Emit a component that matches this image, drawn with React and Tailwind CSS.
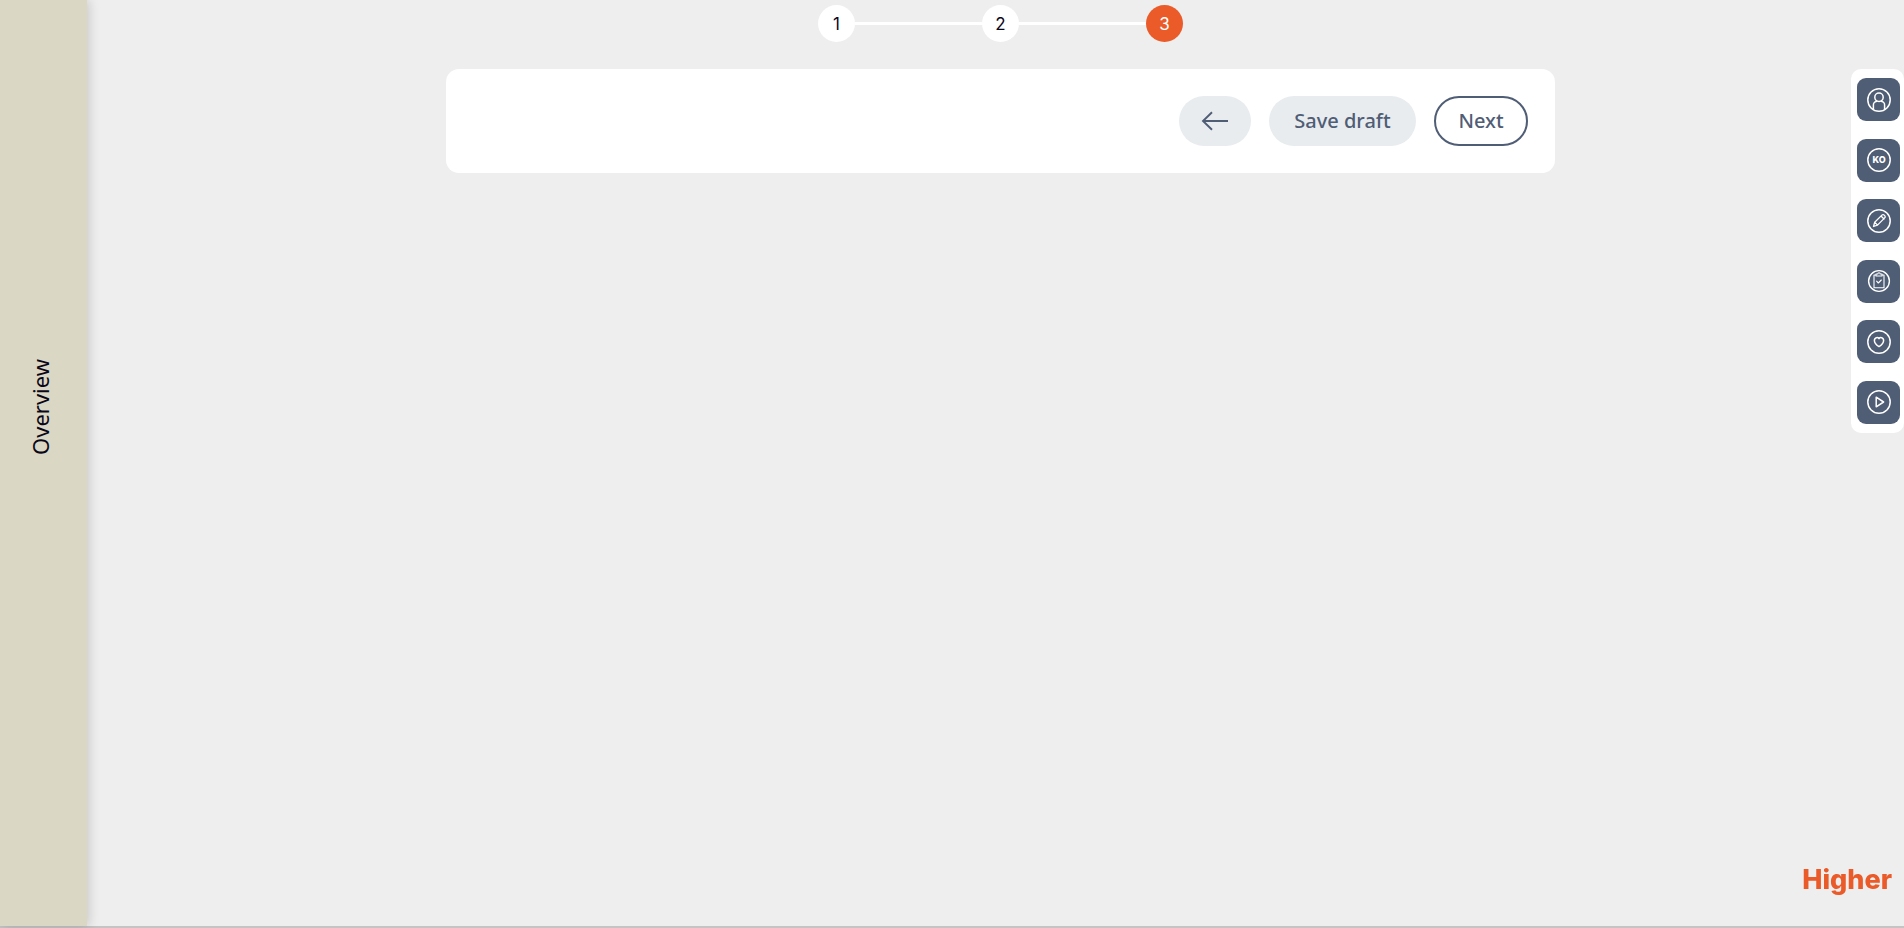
const steps = [1, 2, 3];
const currentStep = 3;

function CircleIcon({ children }) {
    return (
        <svg className="w-6 h-6" viewBox="0 0 24 24" fill="none" stroke="currentColor" strokeWidth="1.5" strokeLinecap="round" strokeLinejoin="round" aria-hidden="true">
            <circle cx="12" cy="12" r="11.2" />
            {children}
        </svg>
    );
}

const tools = [
    {
        name: "Profile",
        icon: (
            <CircleIcon>
                <circle cx="12" cy="9.2" r="4.2" />
                <path d="M6.4 21.3v-3.6a4 4 0 0 1 3.4-4.4M17.6 21.3v-3.6a4 4 0 0 0-3.4-4.4" />
            </CircleIcon>
        ),
    },
    {
        name: "Knock-out questions",
        icon: (
            <CircleIcon>
                <text x="12" y="15.2" textAnchor="middle" fontSize="9" fontWeight="800" fill="currentColor" stroke="none" className="font-['Inter',sans-serif]">KO</text>
            </CircleIcon>
        ),
    },
    {
        name: "Edit",
        icon: (
            <CircleIcon>
                <path d="M6.5 17.5l1.2-4.2 7.2-7.2a1.6 1.6 0 0 1 2.3 0l.5.5a1.6 1.6 0 0 1 0 2.3l-7.2 7.2zM7.7 13.3l2.8 2.8M14 7l3 3" strokeWidth="1.3" />
            </CircleIcon>
        ),
    },
    {
        name: "Checklist",
        icon: (
            <svg className="w-6 h-6" viewBox="0 0 24 24" fill="none" stroke="currentColor" strokeWidth="1.4" strokeLinecap="round" strokeLinejoin="round" aria-hidden="true">
                <circle cx="12" cy="12" r="10.4" />
                <path d="M9 6H7v12.8h10V6h-2M9 5h1.8a1.2 1.2 0 0 1 2.4 0H15v2H9zM9.6 12.2l1.7 1.8 3-3" strokeWidth="1.1" />
            </svg>
        ),
    },
    {
        name: "Favourites",
        icon: (
            <CircleIcon>
                <path d="M12 8.7c-.9-1.6-4.6-1.7-4.6 1.8 0 3 2.5 4.8 4.6 6.1 2.1-1.3 4.6-3.1 4.6-6.1 0-3.5-3.7-3.4-4.6-1.8z" />
            </CircleIcon>
        ),
    },
    {
        name: "Play",
        icon: (
            <CircleIcon>
                <path d="M9.2 7.2v9.6l7.4-4.8z" />
            </CircleIcon>
        ),
    },
];

function Stepper() {
    return (
        <ol className="flex items-center justify-center font-['Inter',sans-serif]">
            {steps.map(step => (
                <li key={step} className="flex items-center">
                    {step > 1 && <span className="w-[127px] h-[3px] bg-white"></span>}
                    <span
                        aria-current={step === currentStep ? "step" : undefined}
                        className={`flex items-center justify-center w-[37px] h-[37px] rounded-full text-[17px] leading-5 ${step === currentStep ? "bg-[#ea5b29] text-white" : "bg-white text-[#0b0718]"}`}
                    >
                        {step}
                    </span>
                </li>
            ))}
        </ol>
    );
}

export default function App() {
    return (
        <div className="flex min-h-screen bg-[#eeeeee] font-['Noto_Sans',sans-serif] border-b-2 border-[#c4c4c4]">
            <aside className="flex items-center justify-center w-[87px] shrink-0 bg-[#dad7c4] shadow-[2px_0_10px_rgba(0,0,0,0.16)]">
                <h2 className="[writing-mode:vertical-rl] rotate-180 mr-2 mb-28 text-[22px] leading-7 text-[#0b0718]">Overview</h2>
            </aside>

            <main className="flex-1 pl-[10px] pt-[5px]">
                <Stepper />
                <div className="flex justify-end gap-[18px] w-full max-w-[1109px] mx-auto mt-[27px] p-[27px] bg-white rounded-[13px] text-[20px] leading-6 font-medium text-[#4f5d75]">
                    <button type="button" aria-label="Back" className="flex items-center justify-center w-[72px] h-[50px] rounded-full bg-[#e8ecef]">
                        <svg className="w-7 h-5" viewBox="0 0 28 20" fill="none" stroke="currentColor" strokeWidth="1.9" aria-hidden="true">
                            <path d="M27 10H2M11 1.3L2 10l9 8.7" />
                        </svg>
                    </button>
                    <button type="button" className="w-[147px] h-[50px] rounded-full bg-[#e8ecef]">Save draft</button>
                    <button type="button" className="w-[94px] h-[50px] rounded-full border-2 border-[#4f5d75]">Next</button>
                </div>
            </main>

            <nav aria-label="Tools" className="fixed right-0 top-[69px] flex flex-col justify-between w-[53px] h-[364px] pl-[6px] py-[9px] bg-white rounded-[10px]">
                {tools.map(tool => (
                    <button key={tool.name} type="button" aria-label={tool.name} className="flex items-center justify-center w-[43px] h-[43px] rounded-[9px] bg-[#4f5d75] text-white">
                        {tool.icon}
                    </button>
                ))}
            </nav>

            <a href="#" className="fixed right-3 bottom-8 font-['Inter',sans-serif] text-[27px] leading-8 font-extrabold text-[#ea5b29]">Higher</a>
        </div>
    );
}
